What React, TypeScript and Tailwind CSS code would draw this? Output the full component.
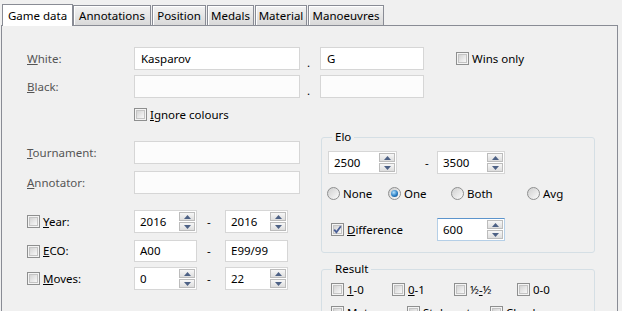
import React from "react";

function Box({ checked = false }: { checked?: boolean }) {
  return (
    <span className="relative inline-block w-[13px] h-[13px] shrink-0 border border-[#8e8f8f] bg-[#f4f4f4] p-px">
      <span className="block w-full h-full border border-[#c4c4c4] bg-linear-to-br from-[#d4d4d4] to-[#f8f8f8]" />
      {checked && (
        <svg className="absolute left-0 top-0" width="11" height="11" viewBox="0 0 11 11">
          <path d="M2.2 5.6 L4.4 8.2 L8.8 2.2" stroke="#4a5f97" strokeWidth="1.8" fill="none" />
        </svg>
      )}
    </span>
  );
}

function Radio({ on = false }: { on?: boolean }) {
  return (
    <span className="w-[13px] h-[13px] shrink-0 rounded-full border border-[#8e8f8f] bg-linear-to-br from-[#cfcfcf] to-[#fbfbfb] flex items-center justify-center">
      {on && (
        <span className="w-[7px] h-[7px] rounded-full bg-[radial-gradient(circle_at_40%_35%,#b5e3ff,#2a7fc4_55%,#0c3e78)]" />
      )}
    </span>
  );
}

function Arrow({ up }: { up?: boolean }) {
  return (
    <svg width="7" height="4" viewBox="0 0 7 4">
      <path d={up ? "M0 4 L3.5 0 L7 4Z" : "M0 0 L3.5 4 L7 0Z"} fill="#4d6185" />
    </svg>
  );
}

function Spin({ value, w, focus = false }: { value: string; w: string; focus?: boolean }) {
  return (
    <div
      className={
        focus
          ? `flex h-[23px] ${w} border border-[#b5cfe7] border-t-[#5c94cc] bg-white`
          : `flex h-[23px] ${w} border border-[#d6d6d6] bg-white`
      }
    >
      <span className="flex-1 pl-[5px] leading-[21px]">{value}</span>
      <div className="flex flex-col gap-px w-[17px] py-px pr-px">
        <div className="flex-1 border border-[#bcbcbc] bg-linear-to-b from-[#f7f7f7] to-[#dedede] flex items-center justify-center">
          <Arrow up />
        </div>
        <div className="flex-1 border border-[#bcbcbc] bg-linear-to-b from-[#f7f7f7] to-[#dedede] flex items-center justify-center">
          <Arrow />
        </div>
      </div>
    </div>
  );
}

function Text({ value = "", w, h = "h-[23px]", bg = "bg-white", pl = "pl-[6px]" }: { value?: string; w: string; h?: string; bg?: string; pl?: string }) {
  return (
    <div className={`${w} ${h} ${bg} ${pl} border border-[#d6d6d6] flex items-center`}>
      {value}
    </div>
  );
}

function Tab({ label, w }: { label: string; w: string }) {
  return (
    <div className={`${w} h-[20px] mr-px border border-b-0 border-[#898c95] bg-linear-to-b from-[#f3f3f3] to-[#d9d9d9] shadow-[inset_1px_1px_0_#fff] flex items-center justify-center`}>
      {label}
    </div>
  );
}

export default function App() {
  return (
    <div className="w-[622px] h-[311px] overflow-hidden bg-[#f0f0f0] text-[11.5px] text-black font-['Noto_Sans',sans-serif]">
      <div className="h-[25px] flex items-end pl-[2px]">
        <div className="relative z-10 w-[71px] h-[22px] -mb-px border border-b-0 border-[#898c95] bg-white flex items-center justify-center">
          Game data
        </div>
        <Tab label="Annotations" w="w-[78px]" />
        <Tab label="Position" w="w-[54px]" />
        <Tab label="Medals" w="w-[47px]" />
        <Tab label="Material" w="w-[52px]" />
        <Tab label="Manoeuvres" w="w-[76px]" />
      </div>

      <div className="ml-px w-[617px] h-[286px] border border-b-0 border-[#898c95] bg-[#f0f0f0] pl-[25px] pt-[21px]">
        <div className="flex items-center h-[23px]">
          <span className="w-[107px] text-[#555]"><u>W</u>hite:</span>
          <Text w="w-[166px]" value="Kasparov" pl="pl-[6px]" />
          <span className="w-[20px] self-end pl-[7px] leading-[14px]">.</span>
          <Text w="w-[104px]" value="G" />
          <span className="ml-[32px] flex items-center gap-[3px]">
            <Box />
            Wins only
          </span>
        </div>
        <div className="flex items-center h-[23px] mt-[5px]">
          <span className="w-[107px] text-[#555]"><u>B</u>lack:</span>
          <Text w="w-[166px]" bg="bg-[#fcfcfc]" />
          <span className="w-[20px] self-end pl-[7px] leading-[14px]">.</span>
          <Text w="w-[104px]" bg="bg-[#fcfcfc]" />
        </div>
        <div className="flex items-center h-[13px] mt-[10px] pl-[107px] gap-[3px]">
          <Box />
          <span><u>I</u>gnore colours</span>
        </div>

        <div className="flex mt-[10px]">
          <div className="w-[294px] pt-[10px]">
            <div className="flex items-center h-[23px]">
              <span className="w-[107px] text-[#555]"><u>T</u>ournament:</span>
              <Text w="w-[166px]" bg="bg-[#fcfcfc]" />
            </div>
            <div className="flex items-center h-[23px] mt-[7px]">
              <span className="w-[107px] text-[#555]"><u>A</u>nnotator:</span>
              <Text w="w-[166px]" bg="bg-[#fcfcfc]" />
            </div>
            <div className="flex items-center h-[23px] mt-[16px]">
              <span className="w-[107px] flex items-center gap-[3px]">
                <Box />
                <span><u>Y</u>ear:</span>
              </span>
              <Spin value="2016" w="w-[63px]" />
              <span className="w-[28px] pl-[10px]">-</span>
              <Spin value="2016" w="w-[63px]" />
            </div>
            <div className="flex items-center h-[22px] mt-[7px]">
              <span className="w-[107px] flex items-center gap-[3px]">
                <Box />
                <span><u>E</u>CO:</span>
              </span>
              <Text w="w-[63px]" h="h-[22px]" value="A00" pl="pl-[5px]" />
              <span className="w-[28px] pl-[10px]">-</span>
              <Text w="w-[63px]" h="h-[22px]" value="E99/99" pl="pl-[5px]" />
            </div>
            <div className="flex items-center h-[23px] mt-[5px]">
              <span className="w-[107px] flex items-center gap-[3px]">
                <Box />
                <span><u>M</u>oves:</span>
              </span>
              <Spin value="0" w="w-[63px]" />
              <span className="w-[28px] pl-[10px]">-</span>
              <Spin value="22" w="w-[63px]" />
            </div>
          </div>

          <div className="w-[274px]">
            <fieldset className="w-[274px] h-[122px] border border-[#d5dfe5] rounded-[3px] px-[6px]">
              <legend className="ml-[4px] px-[3px] leading-[12px]">Elo</legend>
              <div className="flex items-center h-[23px] mt-[8px]">
                <Spin value="2500" w="w-[69px]" />
                <span className="w-[40px] pl-[28px]">-</span>
                <Spin value="3500" w="w-[68px]" />
              </div>
              <div className="flex items-center h-[13px] mt-[13px] -ml-px">
                <span className="w-[61px] flex items-center gap-[3px]"><Radio />None</span>
                <span className="w-[63px] flex items-center gap-[3px]"><Radio on />One</span>
                <span className="w-[76px] flex items-center gap-[3px]"><Radio />Both</span>
                <span className="flex items-center gap-[3px]"><Radio />Avg</span>
              </div>
              <div className="flex items-center h-[23px] mt-[18px] pl-[3px]">
                <span className="w-[106px] flex items-center gap-[3px]">
                  <Box checked />
                  <span><u>D</u>ifference</span>
                </span>
                <Spin value="600" w="w-[68px]" focus />
              </div>
            </fieldset>

            <fieldset className="mt-[10px] w-[274px] h-[80px] border border-[#d5dfe5] rounded-[3px] px-[6px]">
              <legend className="ml-[4px] px-[3px] leading-[12px]">Result</legend>
              <div className="flex items-center h-[13px] mt-[8px] pl-[3px]">
                <span className="w-[61px] flex items-center gap-[3px]"><Box /><span><u>1</u>-0</span></span>
                <span className="w-[62px] flex items-center gap-[3px]"><Box /><span><u>0</u>-1</span></span>
                <span className="w-[63px] flex items-center gap-[3px]"><Box /><span>½<u>-</u>½</span></span>
                <span className="flex items-center gap-[3px]"><Box /><span>0-0</span></span>
              </div>
              <div className="flex items-center h-[13px] mt-[10px] pl-[3px]">
                <span className="w-[76px] flex items-center gap-[3px]"><Box /><span>Mate</span></span>
                <span className="w-[83px] flex items-center gap-[3px]"><Box /><span>Stalemate</span></span>
                <span className="flex items-center gap-[3px]"><Box /><span>Check</span></span>
              </div>
            </fieldset>
          </div>
        </div>
      </div>
    </div>
  );
}
